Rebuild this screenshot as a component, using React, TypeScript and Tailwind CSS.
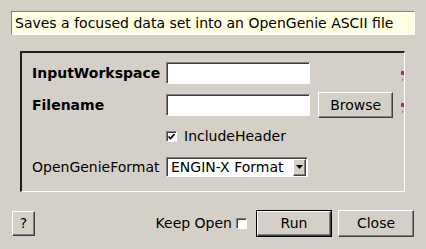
import React from "react";

const raised =
  "border-t border-l border-b border-r border-t-white border-l-white border-b-[#404040] border-r-[#404040] shadow-[inset_-1px_-1px_0_#808080] bg-[#d4d0c8]";
const sunken =
  "border-t border-l border-b border-r border-t-[#808080] border-l-[#808080] border-b-white border-r-white shadow-[inset_1px_1px_0_#404040] bg-white";

function Validator() {
  return (
    <div className="mt-[6px] flex w-[3px] flex-col items-center gap-[4px]">
      <span className="block h-[4px] w-[3px] bg-[#c0302c]" />
      <span className="block h-[2px] w-[1px] bg-[#8a8a8a]" />
    </div>
  );
}

function CheckBox({ checked }: { checked: boolean }) {
  return (
    <span className={`flex h-[11px] w-[11px] items-center justify-center ${sunken}`}>
      {checked && (
        <svg width="7" height="7" viewBox="0 0 7 7">
          <path d="M0.5 3.5 L2.5 5.5 L6.5 1" fill="none" stroke="#000" strokeWidth="1.6" />
        </svg>
      )}
    </span>
  );
}

export default function App() {
  return (
    <div
      className="flex h-[249px] w-[426px] flex-col bg-[#d4d0c8] text-[14px] text-black"
      style={{ fontFamily: '"DejaVu Sans", sans-serif' }}
    >
      {/* description */}
      <div className="mx-[11px] mt-[11px] flex h-[24px] items-center border-t border-l border-b border-r border-t-[#808080] border-l-[#808080] border-b-white border-r-white bg-[#ffffe1] pl-[3px]">
        Saves a focused data set into an OpenGenie ASCII file
      </div>

      {/* properties frame */}
      <div className="ml-[20px] mt-[16px] flex h-[141px] w-[385px] flex-col border-t-2 border-l-2 border-b border-r border-t-[#202020] border-l-[#202020] border-b-white border-r-white pl-[10px] pt-[7px]">
        <div className="flex h-[26px] items-center">
          <span className="w-[134px] font-bold">InputWorkspace</span>
          <span className={`h-[22px] w-[145px] ${sunken}`} />
          <span className="w-[91px]" />
          <Validator />
        </div>
        <div className="mt-[6px] flex h-[26px] items-center">
          <span className="w-[134px] font-bold">Filename</span>
          <span className={`h-[22px] w-[145px] ${sunken}`} />
          <span className="w-[8px]" />
          <span className={`flex h-[26px] w-[75px] items-center justify-center ${raised}`}>Browse</span>
          <span className="w-[8px]" />
          <Validator />
        </div>
        <div className="mt-[5px] flex h-[26px] items-center pl-[134px]">
          <CheckBox checked />
          <span className="ml-[7px]">IncludeHeader</span>
        </div>
        <div className="mt-[5px] flex h-[26px] items-center">
          <span className="w-[134px]">OpenGenieFormat</span>
          <span className={`flex h-[20px] w-[142px] items-center justify-between pl-[4px] pr-[1px] ${sunken}`}>
            <span>ENGIN-X Format</span>
            <span className={`flex h-[17px] w-[13px] items-center justify-center ${raised}`}>
              <svg width="7" height="4" viewBox="0 0 7 4">
                <path d="M0 0 H7 L3.5 4 Z" fill="#000" />
              </svg>
            </span>
          </span>
        </div>
      </div>

      {/* buttons */}
      <div className="mt-[18px] flex h-[27px] items-center pl-[12px] pr-[12px]">
        <span className={`flex h-[25px] w-[23px] items-center justify-center ${raised}`}>?</span>
        <span className="flex-1" />
        <span className="mr-[4px]">Keep Open</span>
        <CheckBox checked={false} />
        <span className="ml-[9px] flex h-[27px] w-[76px] items-center justify-center border border-black">
          <span className={`flex h-full w-full items-center justify-center ${raised}`}>Run</span>
        </span>
        <span className={`ml-[6px] flex h-[27px] w-[76px] items-center justify-center ${raised}`}>Close</span>
      </div>
    </div>
  );
}
